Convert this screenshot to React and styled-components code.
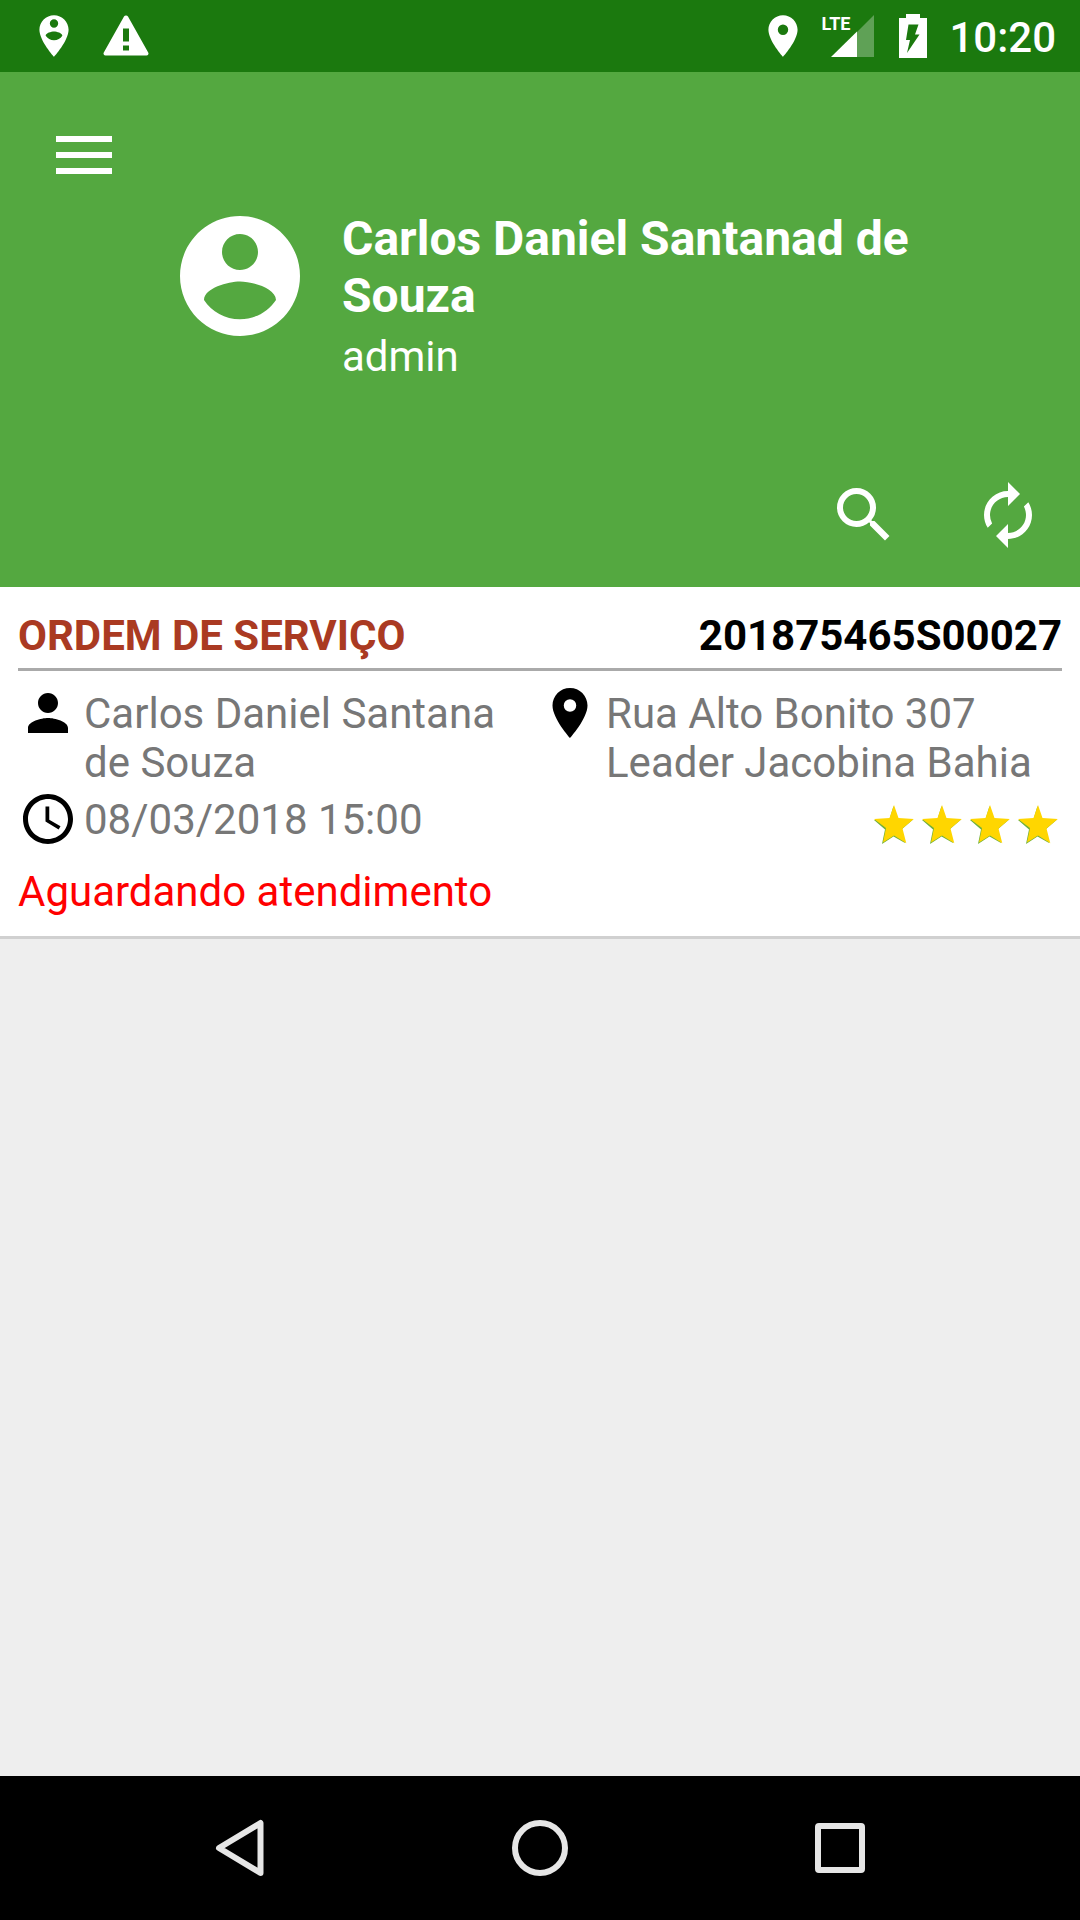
import React from 'react';
import styled, { createGlobalStyle } from 'styled-components';
import {
  MdAutorenew,
  MdLocationOn,
  MdPerson,
  MdPersonPinCircle,
  MdAccessTime,
  MdSearch,
} from 'react-icons/md';

const GlobalStyle = createGlobalStyle`
  * {
    box-sizing: border-box;
  }

  body {
    margin: 0;
    background: #eeeeee;
    font-family: Roboto, sans-serif;
    font-size: 42px;
    line-height: 49px;
  }

  svg {
    display: block;
    flex-shrink: 0;
  }
`;

// Styled Components
const Screen = styled.div`
  min-height: 100vh;
  display: flex;
  flex-direction: column;
`;

const StatusBar = styled.div`
  height: 72px;
  padding: 0 24px 0 29px;
  display: flex;
  align-items: center;
  justify-content: space-between;
  background: #1b790e;
  color: #fff;
`;

const StatusGroup = styled.div`
  display: flex;
  align-items: center;
  gap: 24px;
`;

const Signal = styled.div`
  position: relative;
  margin-left: -11px;
`;

const NetworkLabel = styled.span`
  position: absolute;
  top: 4px;
  left: 0;
  font-family: 'Liberation Sans Narrow', Roboto, sans-serif;
  font-size: 18px;
  font-weight: 700;
  line-height: 18px;
`;

const Clock = styled.time`
  margin-left: -2px;
  padding-top: 2px;
  font-weight: 500;
`;

const Header = styled.header`
  display: flex;
  flex-direction: column;
  padding: 64px 36px 36px;
  background: #54a840;
  color: #fff;
`;

const IconButton = styled.button`
  display: flex;
  padding: 0;
  border: none;
  background: none;
  color: inherit;
  cursor: pointer;
`;

const MenuButton = styled(IconButton)`
  align-self: flex-start;
  margin-left: 20px;
`;

const Profile = styled.div`
  display: flex;
  align-items: flex-start;
  gap: 30px;
  margin-top: 30px;
  padding-left: 132px;
`;

const ProfileText = styled.div`
  display: flex;
  flex-direction: column;
  gap: 8px;
  padding-top: 6px;
`;

const ProfileName = styled.h1`
  margin: 0;
  font-size: 48px;
  font-weight: 700;
  line-height: 57px;
`;

const Actions = styled.div`
  display: flex;
  justify-content: flex-end;
  gap: 72px;
  margin-top: 98px;
`;

const Orders = styled.main`
  flex: 1;
`;

const OrderCard = styled.article`
  padding: 24px 18px 20px;
  border-bottom: 3px solid #d0d0d0;
  background: #fff;
`;

const OrderHead = styled.div`
  display: flex;
  justify-content: space-between;
  padding-bottom: 8px;
  border-bottom: 3px solid #aaaaaa;
  color: #000;
  font-weight: 700;
`;

const OrderTitle = styled.h2`
  margin: 0;
  color: #aa3a22;
  font-size: 42px;
  font-weight: 700;
`;

const Details = styled.div`
  display: grid;
  grid-template-columns: 1fr 1fr;
  row-gap: 2px;
  margin-top: 12px;
`;

const Detail = styled.div`
  display: flex;
  align-items: flex-start;
  gap: 6px;
  color: #000;
`;

const DetailText = styled.span`
  padding-top: 6px;
  color: #777777;
`;

const Rating = styled.div`
  display: flex;
  align-items: flex-end;
  justify-content: flex-end;
`;

const OrderStatus = styled.p`
  margin: 18px 0 0;
  color: #ff0000;
`;

const NavBar = styled.nav`
  height: 144px;
  padding: 0 90px;
  display: grid;
  grid-template-columns: repeat(3, 1fr);
  align-items: center;
  background: #000;
  color: #e6e6e6;
`;

const NavButton = styled(IconButton)`
  justify-content: center;
`;

// Icons
const WarningIcon = () => (
  <svg width="46" height="42" viewBox="0 0 46 42" fill="currentColor" fillRule="evenodd">
    <path d="M21 1.6a2.3 2.3 0 0 1 4 0L45.2 37.5a2 2 0 0 1-1.7 3h-41a2 2 0 0 1-1.7-3zM20 13.5v13h6v-13zM20 30.5v5h6v-5z" />
  </svg>
);

const SignalIcon = () => (
  <svg width="54" height="50" viewBox="0 0 54 50" fill="currentColor">
    <path d="M36 21 53 4v42H36z" opacity="0.3" />
    <path d="M10 46 36 20.5V46z" />
  </svg>
);

const BatteryIcon = () => (
  <svg width="28" height="44" viewBox="0 0 28 44" fill="currentColor" fillRule="evenodd">
    <path d="M7 0h14v4h7v40H0V4h7zM9.5 10.5 7 26h4l-3 13 12.5-18.5H16l3.500-10z" />
  </svg>
);

const AccountIcon = () => (
  <svg width="144" height="144" viewBox="0 0 24 24" fill="currentColor">
    <path d="M12 2C6.48 2 2 6.48 2 12s4.48 10 10 10 10-4.48 10-10S17.52 2 12 2zm0 3c1.66 0 3 1.34 3 3s-1.34 3-3 3-3-1.34-3-3 1.34-3 3-3zm0 14.2c-2.5 0-4.71-1.28-6-3.22.03-1.99 4-3.08 6-3.08 1.99 0 5.97 1.09 6 3.08-1.29 1.94-3.5 3.22-6 3.22z" />
  </svg>
);

const MenuIcon = () => (
  <svg width="56" height="38" viewBox="0 0 56 38" fill="currentColor">
    <path d="M0 0h56v6H0zM0 16h56v6H0zM0 32h56v6H0z" />
  </svg>
);

const StarIcon = () => (
  <svg width="48" height="48" viewBox="0 0 48 48">
    <path
      fill="#6fb03c"
      d="m23.5 5 4 13 15 1-11 9.5 3.500 13.500-11.500-6.500L12 43l3-14.500L4 19l15.500-1z"
    />
    <path
      fill="#ffd600"
      d="m24 4 4.500 13 15.300 1-11.300 9.500L36.300 42.300 24 34.500l-11 7 3-14.500L4 18l15.500-1z"
    />
  </svg>
);

const BackIcon = () => (
  <svg width="60" height="60" viewBox="0 0 60 60" fill="none" stroke="currentColor" strokeWidth="6" strokeLinejoin="round">
    <path d="M50.5 5v50L9 30z" />
  </svg>
);

const HomeIcon = () => (
  <svg width="60" height="60" viewBox="0 0 60 60" fill="none" stroke="currentColor" strokeWidth="6">
    <circle cx="30" cy="30" r="25" />
  </svg>
);

const RecentIcon = () => (
  <svg width="60" height="60" viewBox="0 0 60 60" fill="none" stroke="currentColor" strokeWidth="6">
    <rect x="8" y="8" width="44" height="44" rx="1" />
  </svg>
);

const orders = [
  {
    number: '201875465S00027',
    client: 'Carlos Daniel Santana de Souza',
    address: 'Rua Alto Bonito 307 Leader Jacobina Bahia',
    date: '08/03/2018 15:00',
    rating: 4,
    status: 'Aguardando atendimento',
  },
];

const Order = ({ order }) => (
  <OrderCard>
    <OrderHead>
      <OrderTitle>ORDEM DE SERVIÇO</OrderTitle>
      <span>{order.number}</span>
    </OrderHead>
    <Details>
      <Detail>
        <MdPerson size={60} />
        <DetailText>{order.client}</DetailText>
      </Detail>
      <Detail>
        <MdLocationOn size={60} />
        <DetailText>{order.address}</DetailText>
      </Detail>
      <Detail>
        <MdAccessTime size={60} />
        <DetailText>{order.date}</DetailText>
      </Detail>
      <Rating role="img" aria-label={`${order.rating} estrelas`}>
        {Array.from({ length: order.rating }, (_, i) => (
          <StarIcon key={i} />
        ))}
      </Rating>
    </Details>
    <OrderStatus>{order.status}</OrderStatus>
  </OrderCard>
);

const App = () => (
  <Screen>
    <GlobalStyle />
    <StatusBar>
      <StatusGroup>
        <MdPersonPinCircle size={50} />
        <WarningIcon />
      </StatusGroup>
      <StatusGroup>
        <MdLocationOn size={50} />
        <Signal>
          <NetworkLabel>LTE</NetworkLabel>
          <SignalIcon />
        </Signal>
        <BatteryIcon />
        <Clock>10:20</Clock>
      </StatusGroup>
    </StatusBar>

    <Header>
      <MenuButton type="button" aria-label="Menu">
        <MenuIcon />
      </MenuButton>
      <Profile>
        <AccountIcon />
        <ProfileText>
          <ProfileName>Carlos Daniel Santanad de Souza</ProfileName>
          <span>admin</span>
        </ProfileText>
      </Profile>
      <Actions>
        <IconButton type="button" aria-label="Pesquisar">
          <MdSearch size={72} />
        </IconButton>
        <IconButton type="button" aria-label="Atualizar">
          <MdAutorenew size={72} />
        </IconButton>
      </Actions>
    </Header>

    <Orders>
      {orders.map((order) => (
        <Order key={order.number} order={order} />
      ))}
    </Orders>

    <NavBar>
      <NavButton type="button" aria-label="Voltar">
        <BackIcon />
      </NavButton>
      <NavButton type="button" aria-label="Início">
        <HomeIcon />
      </NavButton>
      <NavButton type="button" aria-label="Recentes">
        <RecentIcon />
      </NavButton>
    </NavBar>
  </Screen>
);

export default App;
